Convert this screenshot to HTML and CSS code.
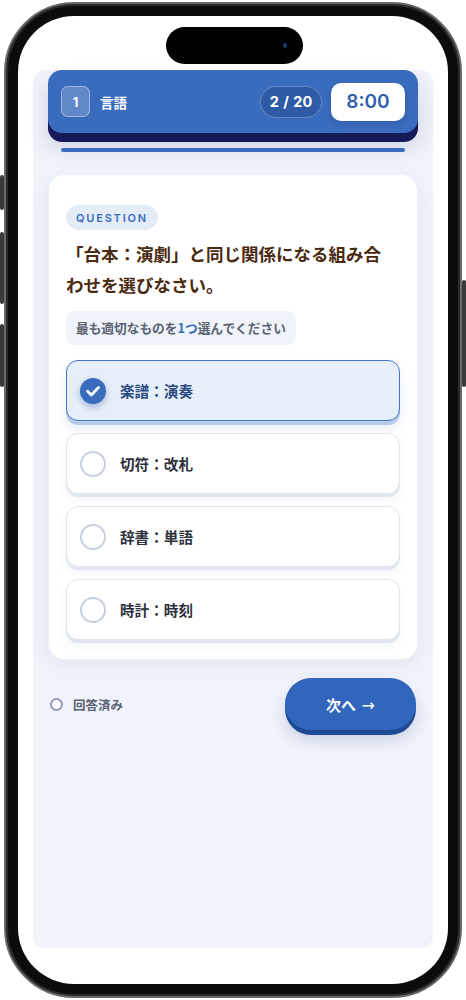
FILE: index.html
```html
<!DOCTYPE html>
<html lang="ja">
<head>
<meta charset="utf-8">
<title>Quiz</title>
<link rel="stylesheet" href="styles.css">
</head>
<body>
<div class="phone">
  <span class="btn btn-l1"></span>
  <span class="btn btn-l2"></span>
  <span class="btn btn-l3"></span>
  <span class="btn btn-r1"></span>
  <div class="screen">
    <div class="island"><span class="cam"></span></div>
    <div class="panel">
      <header class="topbar">
        <div class="num">1</div>
        <div class="section">言語</div>
        <div class="spacer"></div>
        <div class="count">2 / 20</div>
        <div class="timer">8:00</div>
      </header>
      <div class="progress"></div>

      <section class="card">
        <div class="tag">QUESTION</div>
        <h1 class="question">「台本：演劇」と同じ関係になる組み合わせを選びなさい。</h1>
        <div class="hint">最も適切なものを<span class="accent">1つ</span>選んでください</div>
        <ul class="options">
          <li class="option selected">
            <span class="radio">
              <svg viewBox="0 0 26 26" width="26" height="26"><path d="M7.6 13.3l3.7 3.6 7.2-7.3" fill="none" stroke="#fff" stroke-width="2.8" stroke-linecap="round" stroke-linejoin="round"/></svg>
            </span>
            <span class="label">楽譜：演奏</span>
          </li>
          <li class="option"><span class="radio"></span><span class="label">切符：改札</span></li>
          <li class="option"><span class="radio"></span><span class="label">辞書：単語</span></li>
          <li class="option"><span class="radio"></span><span class="label">時計：時刻</span></li>
        </ul>
      </section>

      <div class="footer">
        <div class="status"><span class="dot"></span>回答済み</div>
        <button class="next">次へ <span class="arrow">→</span></button>
      </div>
    </div>
  </div>
</div>
</body>
</html>
```

FILE: styles.css
```css
* { box-sizing: border-box; }
html, body { margin: 0; padding: 0; }
body {
  width: 466px;
  height: 1000px;
  background: #ffffff;
  font-family: Inter, "Noto Sans CJK JP", sans-serif;
  overflow: hidden;
}

.phone {
  position: relative;
  margin: 2px 4px;
  height: 996px;
  border-radius: 70px;
  background: #0c0c0c;
  border: 2px solid #6a6a6a;
  padding: 12px;
  box-shadow: inset 0 0 0 2px #2a2a2a;
}
.btn {
  position: absolute;
  width: 4px;
  background: #3a3a3a;
  border-radius: 2px;
}
.btn-l1 { left: -6px; top: 171px; height: 35px; }
.btn-l2 { left: -6px; top: 228px; height: 72px; }
.btn-l3 { left: -6px; top: 320px; height: 63px; }
.btn-r1 { right: -6px; top: 276px; height: 107px; }

.screen {
  position: relative;
  height: 100%;
  background: #ffffff;
  border-radius: 56px;
  padding: 54px 15px 36px;
  overflow: hidden;
}
.island {
  position: absolute;
  left: 148px;
  top: 11px;
  width: 137px;
  height: 37px;
  background: #000;
  border-radius: 19px;
}
.cam {
  position: absolute;
  right: 16px;
  top: 16px;
  width: 4px;
  height: 5px;
  border-radius: 50%;
  background: #1c3a66;
}

.panel {
  height: 100%;
  background: #f0f3fa;
  border-radius: 12px;
  padding: 0 15px;
  display: flex;
  flex-direction: column;
}

.topbar {
  height: 63px;
  background: #3a6cbd;
  border-radius: 14px;
  box-shadow: 0 9px 0 #16195a, 0 14px 22px rgba(40, 60, 120, 0.18);
  display: flex;
  align-items: center;
  padding: 0 13px;
  color: #fff;
}
.num {
  width: 29px;
  height: 31px;
  border-radius: 7px;
  background: rgba(255, 255, 255, 0.2);
  border: 1px solid rgba(255, 255, 255, 0.4);
  display: flex;
  align-items: center;
  justify-content: center;
  font-size: 13px;
  font-weight: 700;
}
.section {
  margin-left: 10px;
  font-family: "Noto Sans CJK JP", sans-serif;
  font-size: 13.5px;
  font-weight: 700;
}
.spacer { flex: 1; }
.count {
  width: 62px;
  height: 32px;
  border-radius: 16px;
  background: #2e5ba6;
  border: 1px solid rgba(255, 255, 255, 0.25);
  display: flex;
  align-items: center;
  justify-content: center;
  font-size: 14.5px;
  font-weight: 700;
  word-spacing: 1px;
  margin-right: 9px;
}
.timer {
  width: 74px;
  height: 38px;
  border-radius: 10px;
  background: #fff;
  color: #2f5fae;
  display: flex;
  align-items: center;
  justify-content: center;
  font-size: 19px;
  font-weight: 600;
  box-shadow: 0 3px 6px rgba(20, 40, 100, 0.2);
}

.progress {
  height: 4px;
  margin: 15px 13px 0;
  border-radius: 2px;
  background: #3a6cbd;
}

.card {
  margin-top: 22px;
  background: #fff;
  border-radius: 16px;
  padding: 30px 17px 19px 17px;
  box-shadow: 0 6px 20px rgba(60, 80, 140, 0.08);
  border: 1px solid #eef1f6;
}
.tag {
  display: inline-flex;
  align-items: center;
  height: 25px;
  padding: 0 10px;
  border-radius: 13px;
  background: #e4ecf8;
  color: #3a6cbd;
  font-size: 11px;
  font-weight: 600;
  letter-spacing: 1.8px;
}
.question {
  margin: 8px 8px 0 0;
  color: #4a2a10;
  font-family: "Noto Sans CJK JP", sans-serif;
  font-size: 17.5px;
  font-weight: 700;
  line-height: 31px;
}
.hint {
  display: inline-block;
  margin-top: 11px;
  height: 34px;
  line-height: 34px;
  padding: 0 10px;
  border-radius: 9px;
  background: #eff3fa;
  color: #5a6272;
  font-family: "Noto Sans CJK JP", sans-serif;
  font-size: 12.7px;
  font-weight: 700;
}
.accent { color: #3a6cbd; }

.options {
  list-style: none;
  margin: 15px 0 0;
  padding: 0;
  display: flex;
  flex-direction: column;
  gap: 12px;
}
.option {
  height: 61px;
  border-radius: 12px;
  background: #fff;
  border: 1px solid #dfe4ed;
  box-shadow: 0 3px 0 #e2e6ee, 0 6px 10px rgba(60, 80, 140, 0.06);
  display: flex;
  align-items: center;
  padding: 0 13px;
}
.radio {
  width: 26px;
  height: 26px;
  border-radius: 50%;
  border: 2px solid #c7cfdf;
  flex: none;
}
.label {
  margin-left: 14px;
  font-family: "Noto Sans CJK JP", sans-serif;
  font-size: 14.6px;
  font-weight: 700;
  color: #2b303b;
}
.option.selected {
  background: #e6eef9;
  border: 1.5px solid #4474c2;
  box-shadow: 0 4px 0 #b8cbeb, 0 8px 14px rgba(58, 108, 189, 0.12);
}
.option.selected .radio {
  border: none;
  background: #3a6cbd;
  box-shadow: 0 3px 6px rgba(40, 80, 160, 0.35);
}
.option.selected .radio svg { display: block; }
.option.selected .label { color: #2a4a82; }

.footer {
  margin-top: 18px;
  padding: 0 2px;
  display: flex;
  align-items: center;
  justify-content: space-between;
}
.status {
  display: flex;
  align-items: center;
  font-family: "Noto Sans CJK JP", sans-serif;
  font-size: 12.5px;
  font-weight: 700;
  color: #5a6170;
  margin-top: -4px;
}
.dot {
  width: 13px;
  height: 13px;
  border-radius: 50%;
  border: 2px solid #8f9bb7;
  background: #fff;
  margin-right: 10px;
}
.next {
  width: 131px;
  height: 52px;
  border: none;
  border-radius: 26px;
  background: #3166bd;
  color: #fff;
  font-family: "Noto Sans CJK JP", sans-serif;
  font-size: 15px;
  font-weight: 700;
  box-shadow: 0 5px 0 #1f4a93, 0 10px 16px rgba(40, 70, 140, 0.2);
  margin-bottom: 5px;
}
.arrow {
  font-family: "DejaVu Sans", sans-serif;
  font-weight: 400;
  font-size: 16px;
  margin-left: 2px;
}
```
